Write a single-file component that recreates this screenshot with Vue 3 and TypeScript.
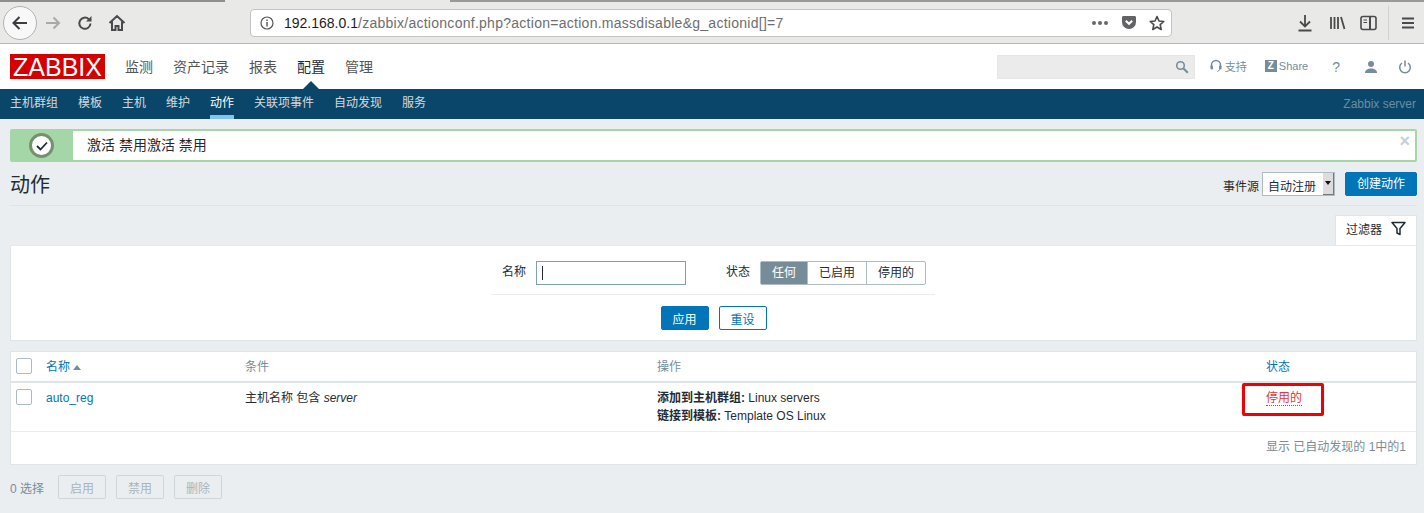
<script setup lang="ts">
const topMenu = ['监测', '资产记录', '报表', '配置', '管理']
const subMenu = ['主机群组', '模板', '主机', '维护', '动作', '关联项事件', '自动发现', '服务']
</script>

<template>
  <div class="page">
    <div class="browser">
      <div class="tabstrip">
        <span class="tab-edge first"></span>
        <span class="tab-edge second"></span>
      </div>
      <div class="toolbar">
        <button class="back" type="button" aria-label="back">
          <svg width="20" height="20" viewBox="0 0 20 20"><path d="M17 10H4M9.500 4 3.500 10l6 6" fill="none" stroke="#3c3c3e" stroke-width="2" /></svg>
        </button>
        <svg class="tool forward" width="18" height="18" viewBox="0 0 18 18"><path d="M2 9h13M9.500 3.500 15 9l-5.500 5.500" fill="none" stroke="#a9a9aa" stroke-width="2" /></svg>
        <svg class="tool reload" width="18" height="18" viewBox="0 0 18 18"><path d="M14.500 9.500a5.600 5.600 0 1 1-1.700-4.300" fill="none" stroke="#4a4a4c" stroke-width="2" /><path d="M15.500 2v5.500H10z" fill="#4a4a4c" /></svg>
        <svg class="tool home" width="18" height="18" viewBox="0 0 18 18"><path d="M1.500 9 9 2l7.500 7M4 7.500V16h3.500v-4h3v4H14V7.500" fill="none" stroke="#4a4a4c" stroke-width="2" /></svg>
        <div class="urlbar">
          <svg class="info" width="14" height="14" viewBox="0 0 14 14"><circle cx="7" cy="7" r="6" fill="none" stroke="#555" stroke-width="1.200" /><path d="M7 6v4.500M7 3.500v1.400" stroke="#555" stroke-width="1.400" /></svg>
          <span class="url"><b>192.168.0.1</b>/zabbix/actionconf.php?action=action.massdisable&amp;g_actionid[]=7</span>
          <span class="dots"><i></i><i></i><i></i></span>
          <svg class="pocket" width="16" height="16" viewBox="0 0 16 16"><path d="M1 2.500C1 1.700 1.600 1 2.400 1h11.200c.8 0 1.400.7 1.400 1.500V7a7 7 0 0 1-14 0z" fill="#636365" /><path d="M4.800 5.800 8 8.800l3.200-3" fill="none" stroke="#fff" stroke-width="2" /></svg>
          <svg class="star" width="16" height="16" viewBox="0 0 16 16"><path d="M8 1.500 10 6l4.800.5-3.600 3.200 1 4.800L8 12l-4.200 2.500 1-4.800L1.200 6.500 6 6z" fill="none" stroke="#4a4a4c" stroke-width="1.600" stroke-linejoin="round" /></svg>
        </div>
        <svg class="tool download" width="16" height="18" viewBox="0 0 16 18"><path d="M8 1v11M3 7.500 8 12.500l5-5M1.500 16.500h13" fill="none" stroke="#4a4a4c" stroke-width="1.800" /></svg>
        <svg class="tool library" width="18" height="16" viewBox="0 0 18 16"><path d="M3 2v12M6.500 2v12M10 2v12M13 2l3.500 12" fill="none" stroke="#4a4a4c" stroke-width="1.800" /></svg>
        <svg class="tool sidebar" width="18" height="16" viewBox="0 0 18 16"><rect x="1" y="1.500" width="15" height="13" rx="2" fill="none" stroke="#4a4a4c" stroke-width="1.600" /><path d="M10 2v12" stroke="#4a4a4c" stroke-width="2" /><path d="M3.500 5H7M3.500 7.500H7" stroke="#4a4a4c" /></svg>
        <span class="tool-sep"></span>
        <svg class="tool burger" width="14" height="14" viewBox="0 0 14 14"><path d="M1 2.500h12M1 7h12M1 11.500h12" stroke="#4a4a4c" stroke-width="2" /></svg>
      </div>
    </div>

    <header class="topbar">
      <div class="logo">ZABBIX</div>
      <nav class="top-menu">
        <a v-for="item in topMenu" :key="item" :class="{ active: item === '配置' }">{{ item }}</a>
      </nav>
      <div class="top-tools">
        <div class="search">
          <svg width="14" height="14" viewBox="0 0 14 14"><circle cx="5.500" cy="5.500" r="3.800" fill="none" stroke="#768d99" stroke-width="1.600" /><path d="m8.500 8.500 4.300 4.300" stroke="#768d99" stroke-width="2" /></svg>
        </div>
        <span class="tool-link support">
          <svg width="12" height="14" viewBox="0 0 12 14"><path d="M1.500 8.500V6a4.500 4.500 0 0 1 9 0v2.500" fill="none" stroke="#768d99" stroke-width="1.500" /><rect x=".500" y="6.500" width="2.500" height="4" rx="1" fill="#768d99" /><rect x="9" y="6.500" width="2.500" height="4" rx="1" fill="#768d99" /><path d="M10 10.500 7.500 12.500" stroke="#768d99" /></svg>
          支持
        </span>
        <span class="tool-link share"><i class="z-box">Z</i>Share</span>
        <span class="help">?</span>
        <svg class="profile" width="14" height="14" viewBox="0 0 14 14"><circle cx="7" cy="4" r="3" fill="#768d99" /><path d="M1 13c0-3 2.500-4.500 6-4.500s6 1.500 6 4.500z" fill="#768d99" /></svg>
        <svg class="power" width="14" height="14" viewBox="0 0 14 14"><path d="M4 3a5.300 5.300 0 1 0 6 0" fill="none" stroke="#768d99" stroke-width="1.500" /><path d="M7 .500v6" stroke="#768d99" stroke-width="1.500" /></svg>
      </div>
    </header>

    <nav class="subnav">
      <a v-for="item in subMenu" :key="item" :class="{ active: item === '动作' }">{{ item }}</a>
      <span class="server">Zabbix server</span>
    </nav>

    <main class="content">
      <div class="message">
        <div class="msg-icon">
          <span class="check-ring">
            <svg width="14" height="12" viewBox="0 0 14 12"><path d="m2 6 3.500 3.500L12 2.500" fill="none" stroke="#1f2c33" stroke-width="1.800" /></svg>
          </span>
        </div>
        <div class="msg-text">激活 禁用激活 禁用</div>
        <span class="msg-close">×</span>
      </div>

      <div class="title-row">
        <h1>动作</h1>
        <div class="title-controls">
          <label>事件源</label>
          <div class="select">
            <span class="select-value">自动注册</span>
            <span class="select-arrow"></span>
          </div>
          <button class="btn primary create" type="button">创建动作</button>
        </div>
      </div>

      <div class="filter-tabs">
        <div class="filter-tab">
          过滤器
          <svg width="15" height="15" viewBox="0 0 15 15"><path d="M1 1.500h13L9 7.500v6l-3-1.500V7.500z" fill="none" stroke="#1f2c33" stroke-width="1.500" stroke-linejoin="round" /></svg>
        </div>
      </div>
      <section class="filter">
        <div class="filter-fields">
          <label>名称</label>
          <div class="name-input"><span class="caret"></span></div>
          <label class="status-label">状态</label>
          <div class="segmented">
            <span class="on">任何</span>
            <span>已启用</span>
            <span>停用的</span>
          </div>
        </div>
        <div class="filter-actions">
          <button class="btn primary" type="button">应用</button>
          <button class="btn outline" type="button">重设</button>
        </div>
      </section>

      <section class="list">
        <div class="row head">
          <span class="c-check"><i class="checkbox"></i></span>
          <span class="c-name link">名称<i class="sort"></i></span>
          <span class="c-cond muted">条件</span>
          <span class="c-op muted">操作</span>
          <span class="c-status link">状态</span>
        </div>
        <div class="row body">
          <span class="c-check"><i class="checkbox"></i></span>
          <span class="c-name link">auto_reg</span>
          <span class="c-cond">主机名称 包含 <em>server</em></span>
          <span class="c-op">
            <div><b>添加到主机群组:</b> Linux servers</div>
            <div><b>链接到模板:</b> Template OS Linux</div>
          </span>
          <span class="c-status">
            <span class="disabled">停用的</span>
            <span class="highlight"></span>
          </span>
        </div>
        <div class="paging">显示 已自动发现的 1中的1</div>
      </section>

      <div class="mass">
        <span class="count">0 选择</span>
        <button class="btn ghost" type="button">启用</button>
        <button class="btn ghost" type="button">禁用</button>
        <button class="btn ghost" type="button">删除</button>
      </div>
    </main>
  </div>
</template>

<style>
html,
body {
  margin: 0;
  background: #ebeef0;
  overflow: hidden;
}
</style>

<style scoped>
.page {
  width: 1424px;
  height: 513px;
  overflow: hidden;
  font-family: "Liberation Sans", "Noto Sans CJK SC", sans-serif;
  font-size: 12px;
  color: #1f2c33;
  background: #ebeef0;
}

.browser {
  height: 44px;
  box-sizing: border-box;
  background: #e9e9e8;
  border-bottom: 1px solid #b8b8b7;
}

.tabstrip {
  height: 3px;
  display: flex;
}

.tab-edge {
  height: 2px;
  background: #8e8e8d;
}

.tab-edge.first {
  width: 225px;
}

.tab-edge.second {
  flex: 1;
  margin-left: 225px;
  background: #9a9a99;
}

.toolbar {
  height: 40px;
  display: flex;
  align-items: center;
  padding-left: 3px;
}

.back {
  width: 34px;
  height: 34px;
  padding: 0;
  display: grid;
  place-items: center;
  border-radius: 50%;
  border: 1px solid #b3b3b3;
  background: #f8f8f8;
}

.tool {
  flex: none;
}

.forward {
  margin-left: 7px;
}

.reload {
  margin-left: 14px;
}

.home {
  margin-left: 14px;
}

.urlbar {
  width: 922px;
  height: 28px;
  margin-left: 124px;
  display: flex;
  align-items: center;
  box-sizing: border-box;
  background: #fff;
  border: 1px solid #c3c3c3;
  border-radius: 4px;
  padding: 0 6px 0 9px;
}

.url {
  flex: 1;
  margin-left: 10px;
  font-size: 14px;
  letter-spacing: 0.270px;
  color: #6e6e70;
  white-space: nowrap;
}

.url b {
  font-weight: 400;
  letter-spacing: 0;
  color: #1c1c1e;
}

.dots {
  display: flex;
  gap: 2px;
  margin-right: 13px;
}

.dots i {
  width: 4px;
  height: 4px;
  border-radius: 50%;
  background: #68686a;
}

.star {
  margin-left: 12px;
}

.download {
  margin-left: 125px;
}

.library {
  margin-left: 15px;
}

.sidebar {
  margin-left: 14px;
}

.tool-sep {
  width: 1px;
  height: 34px;
  margin-left: 10px;
  background: #d2d2d1;
}

.burger {
  margin-left: 12px;
}

.topbar {
  height: 45px;
  box-sizing: border-box;
  display: flex;
  align-items: center;
  background: #fff;
  padding-left: 10px;
}

.logo {
  width: 95px;
  height: 25px;
  background: #d40000;
  color: #fff;
  font-size: 25px;
  line-height: 26px;
  text-align: center;
}

.top-menu {
  display: flex;
  margin-left: 10px;
  height: 100%;
}

.top-menu a {
  position: relative;
  padding: 0 10px;
  font-size: 14px;
  line-height: 46px;
  color: #555;
}

.top-menu a.active {
  color: #1f2c33;
}

.top-menu a.active::after {
  content: "";
  position: absolute;
  left: 50%;
  bottom: 0;
  margin-left: -8px;
  border: 8px solid transparent;
  border-top: 0;
  border-bottom-color: #0a466a;
}

.top-tools {
  margin-left: auto;
  display: flex;
  align-items: center;
  color: #768d99;
  font-size: 11px;
}

.search {
  width: 198px;
  height: 24px;
  box-sizing: border-box;
  background: #ebebeb;
  border: 1px solid #e6e6e6;
  display: flex;
  align-items: center;
  justify-content: flex-end;
  padding-right: 5px;
}

.tool-link {
  display: flex;
  align-items: center;
  padding-bottom: 1px;
}

.support {
  gap: 3px;
  margin-left: 15px;
}

.share {
  margin-left: 18px;
  gap: 2px;
}

.z-box {
  width: 12px;
  height: 12px;
  background: #768d99;
  color: #fff;
  font-style: normal;
  font-weight: 700;
  font-size: 10px;
  line-height: 12px;
  text-align: center;
}

.help {
  margin-left: 24px;
  font-size: 14px;
}

.profile {
  margin-left: 24px;
}

.power {
  margin: 0 12px 0 20px;
}

.subnav {
  height: 30px;
  display: flex;
  align-items: stretch;
  background: #0a466a;
  padding-left: 10px;
}

.subnav a {
  margin-right: 20px;
  line-height: 29px;
  color: #f2f2f2;
  opacity: 0.85;
}

.subnav a.active {
  opacity: 1;
  color: #fff;
  box-shadow: inset 0 -4px 0 #7fc4f2;
}

.server {
  margin-left: auto;
  margin-right: 8px;
  line-height: 30px;
  color: #6a8da3;
}

.content {
  padding: 10px 7px 0 10px;
}

.message {
  position: relative;
  height: 33px;
  box-sizing: border-box;
  display: flex;
  background: #fff;
  border: 2px solid #a5d6a7;
  border-radius: 2px;
}

.msg-icon {
  width: 61px;
  box-sizing: border-box;
  padding-right: 2px;
  background: #a5d6a7;
  display: grid;
  place-items: center;
}

.check-ring {
  width: 19px;
  height: 19px;
  display: grid;
  place-items: center;
  border-radius: 50%;
  background: #fff;
  border: 3px solid #75906f;
}

.msg-text {
  margin-left: 14px;
  font-size: 14px;
  line-height: 28px;
  color: #1f2c33;
}

.msg-close {
  position: absolute;
  top: 0;
  right: 5px;
  font-size: 18px;
  line-height: 20px;
  font-weight: 700;
  color: #c6d0d6;
}

.title-row {
  height: 43px;
  margin-top: 0;
  display: flex;
  align-items: center;
  justify-content: space-between;
  border-bottom: 1px solid #dfe4e7;
}

h1 {
  margin: 0;
  font-size: 20px;
  font-weight: 400;
  color: #1f2c33;
}

.title-controls {
  display: flex;
  align-items: center;
}

.title-controls label {
  padding-top: 3px;
}

.select {
  width: 73px;
  height: 24px;
  margin-left: 3px;
  box-sizing: border-box;
  display: flex;
  align-items: center;
  justify-content: space-between;
  background: #fff;
  border: 1px solid #acbbc4;
  padding-left: 5px;
  font-size: 12px;
}

.select-value {
  padding-top: 3px;
}

.select-arrow {
  position: relative;
  width: 11px;
  height: 22px;
  box-sizing: border-box;
  background: #dcdcdc;
  border-right: 1px solid #777;
  border-bottom: 1px solid #777;
}

.select-arrow::after {
  content: "";
  position: absolute;
  top: 8px;
  left: 2px;
  border: 3px solid transparent;
  border-bottom: 0;
  border-top: 4px solid #111;
}

.btn {
  height: 24px;
  box-sizing: border-box;
  padding: 0;
  border-radius: 2px;
  font: inherit;
}

.primary {
  width: 48px;
  background: #0275b8;
  border: 1px solid #0275b8;
  color: #fff;
}

.create {
  width: 72px;
  margin-left: 10px;
  padding-bottom: 2px;
}

.outline {
  width: 48px;
  background: #fff;
  border: 1px solid #0275b8;
  color: #0275b8;
}

.filter-tabs {
  display: flex;
  justify-content: flex-end;
  margin-top: 9px;
}

.filter-tab {
  width: 82px;
  height: 30px;
  box-sizing: border-box;
  display: flex;
  align-items: center;
  gap: 9px;
  padding: 0 0 4px 10px;
  background: #fff;
  border: 1px solid #dfe4e7;
  border-bottom: 0;
}

.filter {
  height: 96px;
  box-sizing: border-box;
  background: #fff;
  border: 1px solid #dfe4e7;
  border-top-color: #e6e9eb;
}

.filter-fields {
  width: 444px;
  height: 49px;
  margin: 0 0 0 480px;
  padding-left: 11px;
  box-sizing: border-box;
  display: flex;
  align-items: flex-start;
  padding-top: 15px;
  border-bottom: 1px solid #ebeef0;
  line-height: 24px;
}

.filter-fields label {
  line-height: 23px;
}

.name-input {
  width: 150px;
  height: 24px;
  margin-left: 10px;
  box-sizing: border-box;
  display: flex;
  align-items: center;
  padding-left: 5px;
  border: 1px solid #7f9fb3;
}

.caret {
  width: 1px;
  height: 14px;
  background: #1f2c33;
}

.status-label {
  margin-left: 40px;
}

.segmented {
  display: flex;
  margin-left: 10px;
  box-sizing: border-box;
  height: 24px;
  border: 1px solid #acbbc4;
  border-radius: 2px;
  line-height: 22px;
}

.segmented span {
  padding: 0 11px;
  border-left: 1px solid #acbbc4;
}

.segmented span:first-child {
  border-left: 0;
}

.segmented .on {
  background: #768d99;
  color: #fff;
}

.filter-actions {
  display: flex;
  justify-content: center;
  gap: 10px;
  margin-top: 11px;
}

.list {
  margin-top: 10px;
  height: 114px;
  box-sizing: border-box;
  background: #fff;
  border: 1px solid #dfe4e7;
}

.row {
  display: grid;
  grid-template-columns: 35px 199px 412px 609px 1fr;
}

.head {
  height: 29px;
  line-height: 30px;
  border-bottom: 2px solid #dfe4e7;
}

.body {
  height: 49px;
  padding-top: 6px;
  box-sizing: border-box;
  line-height: 18px;
  border-bottom: 1px solid #ebeef0;
}

.c-check {
  display: block;
  padding-left: 5px;
}

.head .c-check {
  padding-top: 6px;
  line-height: 0;
}

.body .c-check {
  line-height: 0;
}

.checkbox {
  display: inline-block;
  width: 16px;
  height: 16px;
  box-sizing: border-box;
  border: 1px solid #acbbc4;
  border-radius: 2px;
  background: #fff;
}

.link {
  color: #0275b8;
}

.muted {
  color: #768d99;
}

.sort {
  display: inline-block;
  margin-left: 3px;
  vertical-align: 1px;
  border: 4px solid transparent;
  border-top: 0;
  border-bottom: 5px solid #768d99;
}

.c-status {
  position: relative;
}

.disabled {
  color: #e33734;
  border-bottom: 1px dotted #e33734;
}

.highlight {
  position: absolute;
  left: -24px;
  top: -6px;
  width: 82px;
  height: 33px;
  box-sizing: border-box;
  border: 3px solid #f00000;
  border-radius: 2px;
}

.paging {
  padding-right: 10px;
  text-align: right;
  line-height: 31px;
  color: #768d99;
}

.mass {
  display: flex;
  align-items: center;
  margin-top: 10px;
  color: #768d99;
}

.count {
  width: 48px;
}

.ghost {
  width: 48px;
  margin-right: 10px;
  background: #ebeef0;
  border: 1px solid #cfd6da;
  color: #a8b5bd;
}
</style>
